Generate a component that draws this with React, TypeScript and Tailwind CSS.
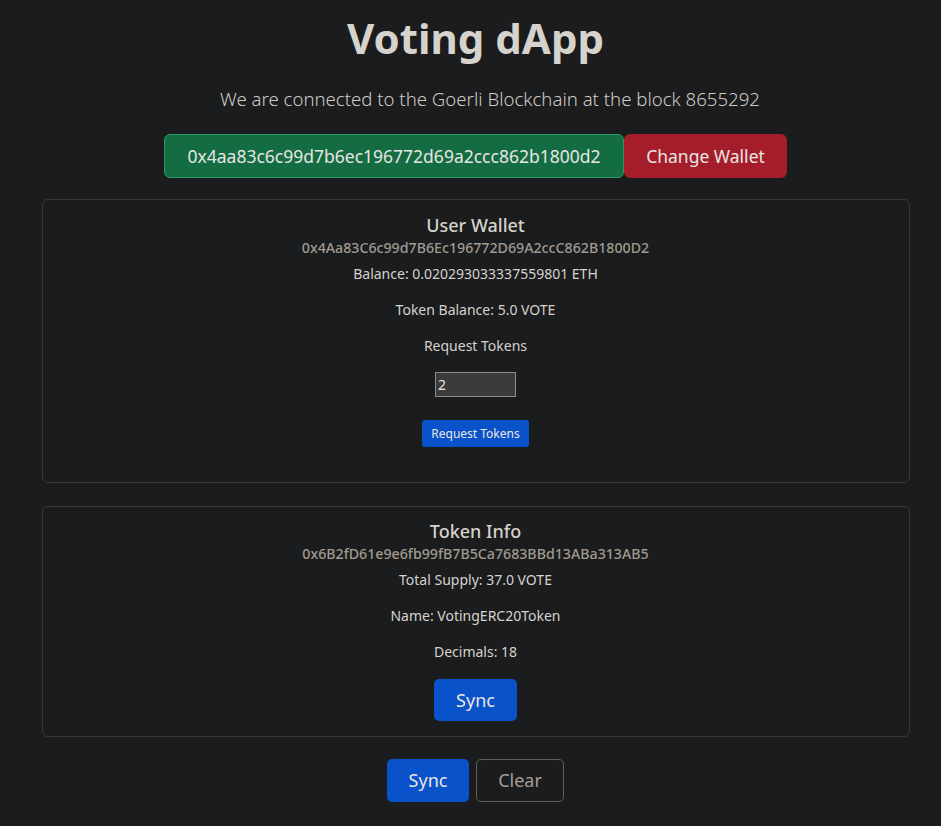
import React from "react";

export default function App() {
  return (
    <div
      className="min-h-[826px] w-full bg-[#1b1c1e] text-[#d6d2cc] pl-[10px]"
      style={{ fontFamily: '"Noto Sans", "Open Sans", sans-serif' }}
    >
      <div className="flex flex-col items-center">
        <h1 className="mt-[12px] text-[42px] leading-[52px] font-bold text-[#d6d2cc]">Voting dApp</h1>
        <p className="mt-[23px] ml-[29px] text-[18.6px] leading-[24px] font-light text-[#cfcac3]">
          We are connected to the Goerli Blockchain at the block 8655292
        </p>
        <div className="mt-[23px] flex">
          <button className="h-[44px] w-[460px] rounded-[6px] border border-[#2a9a64] bg-[#146c43] text-[17.5px] text-[#e8e6e3]">
            0x4aa83c6c99d7b6ec196772d69a2ccc862b1800d2
          </button>
          <button className="h-[44px] w-[163px] rounded-[6px] bg-[#a51d2b] text-[17.5px] text-[#e8e6e3]">
            Change Wallet
          </button>
        </div>

        <div className="mt-[21px] w-[868px] h-[284px] rounded-[6px] border border-[#363a3d] flex flex-col items-center pt-[13px]">
          <h5 className="text-[18px] leading-[24px] font-medium text-[#d6d2cc]">User Wallet</h5>
          <h6 className="text-[14.2px] leading-[20px] font-medium text-[#a09a8f] mt-[1px]">
            0x4Aa83C6c99d7B6Ec196772D69A2ccC862B1800D2
          </h6>
          <p className="mt-[6px] text-[14px] leading-[20px]">Balance: 0.020293033337559801 ETH</p>
          <p className="mt-[16px] text-[14px] leading-[20px]">Token Balance: 5.0 VOTE</p>
          <p className="mt-[16px] text-[14px] leading-[20px]">Request Tokens</p>
          <input
            defaultValue="2"
            className="mt-[16px] h-[25px] w-[81px] border border-[#8b8b8b] bg-[#3b3b3b] px-[2px] text-[14px] text-[#e8e6e3] outline-none"
          />
          <button className="mt-[23px] h-[27px] w-[107px] rounded-[3px] bg-[#0a52c9] text-[12px] text-[#e8e6e3]">
            Request Tokens
          </button>
        </div>

        <div className="mt-[23px] w-[868px] h-[231px] rounded-[6px] border border-[#363a3d] flex flex-col items-center pt-[12px]">
          <h5 className="text-[18px] leading-[24px] font-medium text-[#d6d2cc]">Token Info</h5>
          <h6 className="text-[14.2px] leading-[20px] font-medium text-[#a09a8f] mt-[1px]">
            0x6B2fD61e9e6fb99fB7B5Ca7683BBd13ABa313AB5
          </h6>
          <p className="mt-[6px] text-[14px] leading-[20px]">Total Supply: 37.0 VOTE</p>
          <p className="mt-[16px] text-[14px] leading-[20px]">Name: VotingERC20Token</p>
          <p className="mt-[16px] text-[14px] leading-[20px]">Decimals: 18</p>
          <button className="mt-[17px] h-[42px] w-[83px] rounded-[5px] bg-[#0a52c9] text-[18px] text-[#e8e6e3]">
            Sync
          </button>
        </div>

        <div className="mt-[22px] flex gap-[7px]">
          <button className="h-[43px] w-[82px] rounded-[5px] bg-[#0a52c9] text-[18px] text-[#e8e6e3]">Sync</button>
          <button className="h-[43px] w-[88px] rounded-[5px] border border-[#655e55] text-[18px] text-[#a59e93]">
            Clear
          </button>
        </div>
      </div>
    </div>
  );
}
